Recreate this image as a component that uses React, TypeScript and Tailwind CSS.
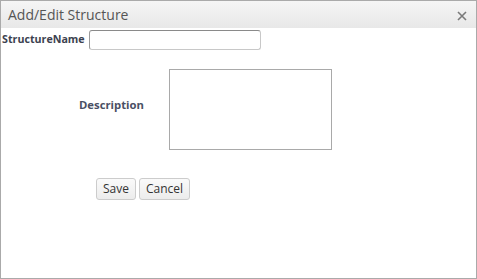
import React from "react";

const App = () => {
  return (
    <div className="w-[477px] h-[279px] bg-white border border-[#aaaaaa] flex flex-col font-['Open_Sans',sans-serif]">
      <div className="flex items-center justify-between h-[27px] shrink-0 bg-gradient-to-b from-[#f5f5f5] to-[#e8e8e8] pl-[7px] pr-[9px]">
        <span className="text-[14px] text-[#555555] leading-none">Add/Edit Structure</span>
        <svg width="10" height="10" viewBox="0 0 10 10" className="mt-[2px]">
          <path d="M1 1 L9 9 M9 1 L1 9" stroke="#7a7a7a" strokeWidth="1.6" />
        </svg>
      </div>
      <div className="flex items-center h-[21px] mt-[1px] pl-[1px]">
        <span className="text-[10.7px] font-bold text-[#3c4250]">StructureName</span>
        <input
          type="text"
          className="ml-[4px] w-[172px] h-[20px] rounded-[3px] border border-[#c8c8c8] border-t-[#8a8a8a] border-l-[#9a9a9a] outline-none bg-white"
        />
      </div>
      <div className="flex items-start mt-[19px] pl-[78px]">
        <span className="text-[11.3px] font-bold text-[#4a5064] w-[90px] mt-[28px]">Description</span>
        <div className="w-[163px] h-[81px] border border-[#a9a9a9] bg-white" />
      </div>
      <div className="flex gap-[3px] mt-[28px] pl-[95px]">
        <button className="h-[22px] px-[6px] text-[12px] text-[#333333] rounded-[3px] border border-[#cccccc] bg-gradient-to-b from-[#fafafa] to-[#ececec]">
          Save
        </button>
        <button className="h-[22px] px-[6px] text-[12px] text-[#333333] rounded-[3px] border border-[#cccccc] bg-gradient-to-b from-[#fafafa] to-[#ececec]">
          Cancel
        </button>
      </div>
    </div>
  );
};

export default App;
